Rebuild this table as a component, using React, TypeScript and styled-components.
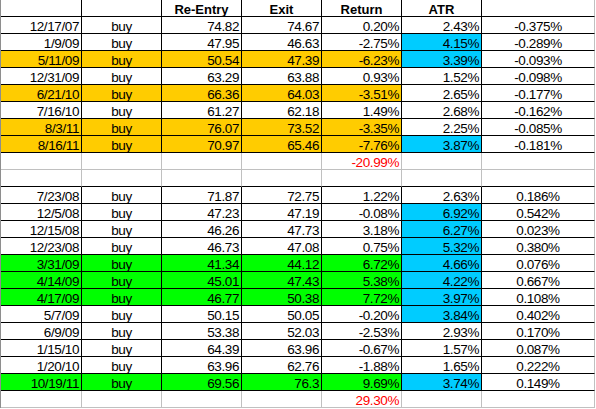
import React from "react";
import styled, { createGlobalStyle } from "styled-components";

const Global = createGlobalStyle`
  html, body { margin: 0; padding: 0; background: #ffffff; }
  body { font-family: "Liberation Sans", Arial, sans-serif; }
`;

const BLACK = "#000000";
const GRID = "#c0c0c0";

const Sheet = styled.div`
  display: grid;
  grid-template-columns: 81px repeat(5, 80px) 113px;
  grid-auto-rows: 17px;
  width: 595px;
  border-left: 1px solid #8e8e8e;
  background: #ffffff;
`;

type Align = "left" | "center" | "right";

const Cell = styled.div<{
  $bg?: string;
  $align: Align;
  $rb: string;
  $bb: string;
  $bold?: boolean;
  $red?: boolean;
}>`
  box-sizing: border-box;
  display: flex;
  align-items: flex-end;
  justify-content: ${(p) =>
    p.$align === "right" ? "flex-end" : p.$align === "center" ? "center" : "flex-start"};
  padding: 0 2px;
  background: ${(p) => p.$bg || "#ffffff"};
  border-right: 1px solid ${(p) => p.$rb};
  border-bottom: 1px solid ${(p) => p.$bb};
  font-size: ${(p) => (p.$bold ? "13px" : "13.5px")};
  line-height: 13px;
  letter-spacing: ${(p) => (p.$bold ? "0" : "-0.4px")};
  font-weight: ${(p) => (p.$bold ? 700 : 400)};
  color: ${(p) => (p.$red ? "#ff0000" : "#000000")};
  white-space: nowrap;
  overflow: hidden;
`;

const ORANGE = "#ffcc00";
const GREEN = "#00ff00";
const BLUE = "#00ccff";

type Trade = {
  date: string;
  entry: string;
  exit: string;
  ret: string;
  atr: string;
  extra: string;
  hl?: "o" | "g";
  blue?: boolean;
};

const block1: Trade[] = [
  { date: "12/17/07", entry: "74.82", exit: "74.67", ret: "0.20%", atr: "2.43%", extra: "-0.375%" },
  { date: "1/9/09", entry: "47.95", exit: "46.63", ret: "-2.75%", atr: "4.15%", extra: "-0.289%", blue: true },
  { date: "5/11/09", entry: "50.54", exit: "47.39", ret: "-6.23%", atr: "3.39%", extra: "-0.093%", hl: "o", blue: true },
  { date: "12/31/09", entry: "63.29", exit: "63.88", ret: "0.93%", atr: "1.52%", extra: "-0.098%" },
  { date: "6/21/10", entry: "66.36", exit: "64.03", ret: "-3.51%", atr: "2.65%", extra: "-0.177%", hl: "o" },
  { date: "7/16/10", entry: "61.27", exit: "62.18", ret: "1.49%", atr: "2.68%", extra: "-0.162%" },
  { date: "8/3/11", entry: "76.07", exit: "73.52", ret: "-3.35%", atr: "2.25%", extra: "-0.085%", hl: "o" },
  { date: "8/16/11", entry: "70.97", exit: "65.46", ret: "-7.76%", atr: "3.87%", extra: "-0.181%", hl: "o", blue: true },
];

const block2: Trade[] = [
  { date: "7/23/08", entry: "71.87", exit: "72.75", ret: "1.22%", atr: "2.63%", extra: "0.186%" },
  { date: "12/5/08", entry: "47.23", exit: "47.19", ret: "-0.08%", atr: "6.92%", extra: "0.542%", blue: true },
  { date: "12/15/08", entry: "46.26", exit: "47.73", ret: "3.18%", atr: "6.27%", extra: "0.023%", blue: true },
  { date: "12/23/08", entry: "46.73", exit: "47.08", ret: "0.75%", atr: "5.32%", extra: "0.380%", blue: true },
  { date: "3/31/09", entry: "41.34", exit: "44.12", ret: "6.72%", atr: "4.66%", extra: "0.076%", hl: "g", blue: true },
  { date: "4/14/09", entry: "45.01", exit: "47.43", ret: "5.38%", atr: "4.22%", extra: "0.667%", hl: "g", blue: true },
  { date: "4/17/09", entry: "46.77", exit: "50.38", ret: "7.72%", atr: "3.97%", extra: "0.108%", hl: "g", blue: true },
  { date: "5/7/09", entry: "50.15", exit: "50.05", ret: "-0.20%", atr: "3.84%", extra: "0.402%", blue: true },
  { date: "6/9/09", entry: "53.38", exit: "52.03", ret: "-2.53%", atr: "2.93%", extra: "0.170%" },
  { date: "1/15/10", entry: "64.39", exit: "63.96", ret: "-0.67%", atr: "1.57%", extra: "0.087%" },
  { date: "1/20/10", entry: "63.96", exit: "62.76", ret: "-1.88%", atr: "1.65%", extra: "0.222%" },
  { date: "10/19/11", entry: "69.56", exit: "76.3", ret: "9.69%", atr: "3.74%", extra: "0.149%", hl: "g", blue: true },
];

const aligns: Align[] = ["right", "center", "right", "right", "right", "right", "center"];

function HeaderRow() {
  const labels = ["", "", "Re-Entry", "Exit", "Return", "ATR", ""];
  return (
    <>
      {labels.map((l, i) => (
        <Cell key={i} $align="center" $bold $rb={i === 6 ? GRID : BLACK} $bb={BLACK}>
          {l}
        </Cell>
      ))}
    </>
  );
}

function TradeRow({ t }: { t: Trade }) {
  const vals = [t.date, "buy", t.entry, t.exit, t.ret, t.atr, t.extra];
  const hlColor = t.hl === "o" ? ORANGE : t.hl === "g" ? GREEN : undefined;
  return (
    <>
      {vals.map((v, i) => (
        <Cell
          key={i}
          $align={aligns[i]}
          $bg={i < 5 ? hlColor : i === 5 && t.blue ? BLUE : undefined}
          $rb={i === 6 ? GRID : BLACK}
          $bb={BLACK}
        >
          {v}
        </Cell>
      ))}
    </>
  );
}

function GapRow({ total, bottom }: { total?: string; bottom: string }) {
  return (
    <>
      {Array.from({ length: 7 }).map((_, i) => (
        <Cell key={i} $align="right" $rb={GRID} $bb={bottom} $red={i === 4}>
          {i === 4 && total ? total : ""}
        </Cell>
      ))}
    </>
  );
}

export default function App() {
  return (
    <>
      <Global />
      <Sheet>
        <HeaderRow />
        {block1.map((t) => (
          <TradeRow key={t.date} t={t} />
        ))}
        <GapRow total="-20.99%" bottom={GRID} />
        <GapRow bottom={BLACK} />
        {block2.map((t) => (
          <TradeRow key={t.date} t={t} />
        ))}
        <GapRow total="29.30%" bottom={GRID} />
      </Sheet>
    </>
  );
}
